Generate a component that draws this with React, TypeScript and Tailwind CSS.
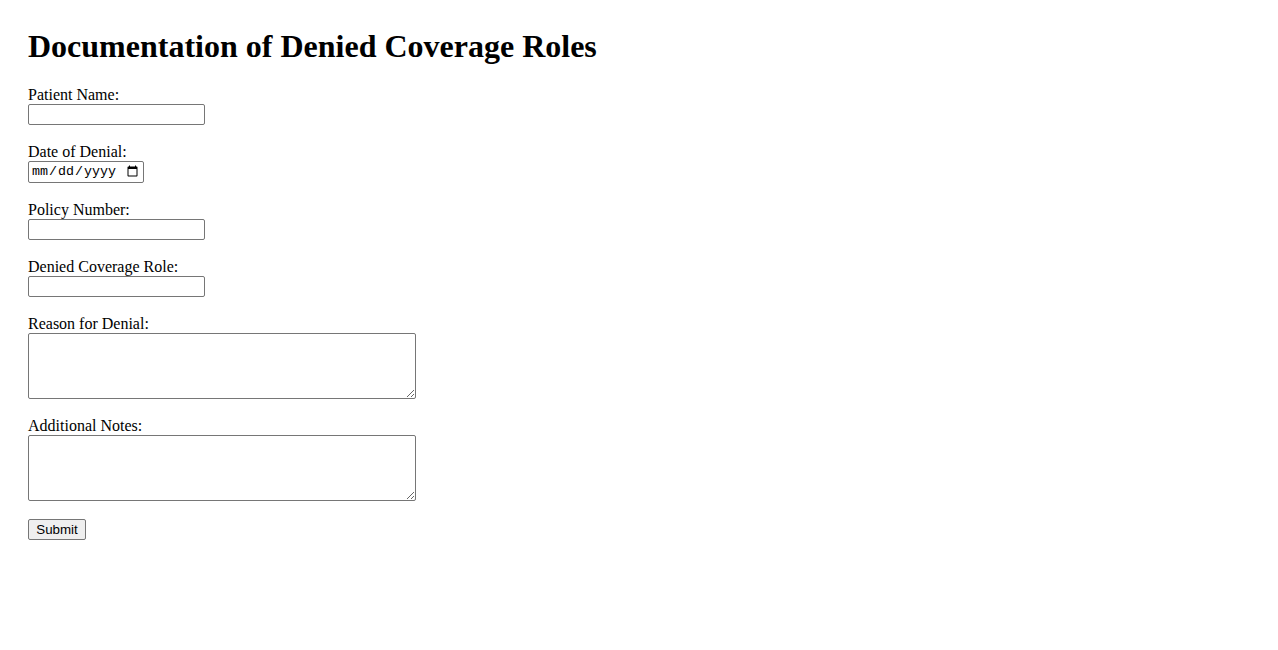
import { useState } from 'react';

const fields = [
  { id: 'patientName', label: 'Patient Name:', kind: 'text' },
  { id: 'denialDate', label: 'Date of Denial:', kind: 'date' },
  { id: 'policyNumber', label: 'Policy Number:', kind: 'text' },
  { id: 'deniedRole', label: 'Denied Coverage Role:', kind: 'text' },
  { id: 'reason', label: 'Reason for Denial:', kind: 'area' },
  { id: 'notes', label: 'Additional Notes:', kind: 'area' },
] as const;

export default function App() {
  const [values, setValues] = useState<Record<string, string>>({});

  const update = (id: string, v: string) => setValues((prev) => ({ ...prev, [id]: v }));

  return (
    <div className="min-h-screen bg-white px-[28px] pt-[28px] text-black font-['Liberation_Serif',serif] text-[16px]">
      <h1 className="text-[32px] font-bold leading-[37px] mb-[21px]">Documentation of Denied Coverage Roles</h1>
      <form
        className="flex flex-col items-start"
        onSubmit={(e) => {
          e.preventDefault();
        }}
      >
        {fields.map((f) => (
          <div key={f.id} className="flex flex-col items-start mb-[18px]">
            <label htmlFor={f.id} className="leading-[18px]">
              {f.label}
            </label>
            {f.kind === 'text' && (
              <input
                id={f.id}
                type="text"
                value={values[f.id] || ''}
                onChange={(e) => update(f.id, e.target.value)}
                className="w-[177px] h-[21px] border border-[#767676] rounded-[2px] px-[2px] py-[1px] bg-white text-[13.33px] font-['Liberation_Sans',Arial,sans-serif]"
              />
            )}
            {f.kind === 'date' && (
              <input
                id={f.id}
                type="date"
                value={values[f.id] || ''}
                onChange={(e) => update(f.id, e.target.value)}
                className="w-[116px] h-[22px] border border-[#767676] rounded-[2px] px-[2px] py-[1px] bg-white text-[13.33px] font-['Liberation_Mono',monospace]"
              />
            )}
            {f.kind === 'area' && (
              <textarea
                id={f.id}
                value={values[f.id] || ''}
                onChange={(e) => update(f.id, e.target.value)}
                className="w-[388px] h-[66px] border border-[#767676] rounded-[2px] p-[2px] bg-white resize text-[13.33px] font-['Liberation_Mono',monospace]"
              />
            )}
          </div>
        ))}
        <button
          type="submit"
          className="h-[21px] w-[58px] border border-[#767676] rounded-[2px] bg-[#efefef] text-[13.33px] leading-[15px] font-['Liberation_Sans',Arial,sans-serif]"
        >
          Submit
        </button>
      </form>
    </div>
  );
}
